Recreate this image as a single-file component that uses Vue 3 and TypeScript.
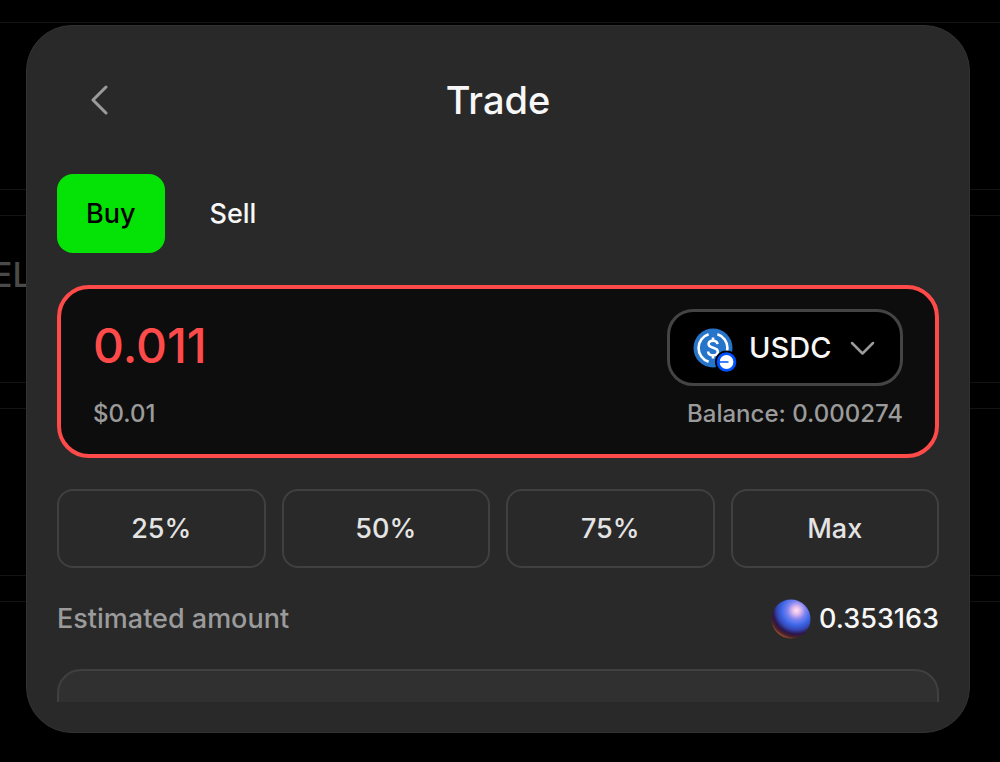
<script setup lang="ts">
import { ref } from 'vue'

type Side = 'Buy' | 'Sell'

const sides: Side[] = ['Buy', 'Sell']
const side = ref<Side>('Buy')
const amount = ref('0.011')
const token = ref('USDC')
const balance = 0.000274
const presets = [
  { label: '25%', share: 0.25 },
  { label: '50%', share: 0.5 },
  { label: '75%', share: 0.75 },
  { label: 'Max', share: 1 },
]

function applyPreset(share: number) {
  amount.value = String(Number((balance * share).toFixed(6)))
}
</script>

<template>
  <div class="page">
    <div class="backdrop" aria-hidden="true">
      <div class="backdrop-row"></div>
      <div class="backdrop-row"><span>EL</span></div>
      <div class="backdrop-row"></div>
      <div class="backdrop-row"></div>
    </div>

    <main class="card">
      <header class="header">
        <button class="back" type="button" aria-label="Back">
          <svg width="20" height="30" viewBox="0 0 20 30" fill="none" stroke="currentColor" stroke-width="3" stroke-linecap="round" stroke-linejoin="round">
            <path d="M17 2 4 15l13 13" />
          </svg>
        </button>
        <h1>Trade</h1>
      </header>

      <div class="sides">
        <button
          v-for="s in sides"
          :key="s"
          type="button"
          class="side"
          :class="{ active: side === s }"
          :aria-pressed="side === s"
          @click="side = s"
        >{{ s }}</button>
      </div>

      <section class="entry">
        <div class="entry-line">
          <input v-model="amount" class="amount" type="text" inputmode="decimal" aria-label="Amount" />
          <label class="token">
            <svg class="coin" width="44" height="44" viewBox="0 0 44 44" fill="none">
              <circle cx="20" cy="20" r="19.5" fill="#2775ca" />
              <g stroke="#fff" stroke-width="2.6">
                <path d="M15.6 6.2A14.5 14.5 0 0 0 15.6 33.8" />
                <path d="M24.4 6.2A14.5 14.5 0 0 1 24.4 33.8" />
                <path d="M24.5 16.2c-.3-2.4-2-3.5-4.5-3.5-2.7 0-4.4 1.3-4.4 3.4 0 5 9.2 2.4 9.2 7.6 0 2.200-1.900 3.600-4.800 3.600-2.900 0-4.700-1.300-4.900-3.800" />
                <path d="M20 9.500v3.500M20 27v3.500" />
              </g>
              <circle cx="33.500" cy="34" r="11.500" fill="#000" />
              <circle cx="33.500" cy="34" r="9.800" fill="#0052ff" />
              <circle cx="33.500" cy="34" r="6.900" fill="#fff" />
              <path d="M26 34h9.500" stroke="#0052ff" stroke-width="1.500" />
            </svg>
            <select v-model="token" aria-label="Token">
              <option>USDC</option>
            </select>
            <svg class="chevron" width="26" height="18" viewBox="0 0 26 18" fill="none" stroke="currentColor" stroke-width="2.500" stroke-linecap="round" stroke-linejoin="round">
              <path d="M3 4l10.500 10.500L24 4" />
            </svg>
          </label>
        </div>
        <div class="entry-line note">
          <span>$0.01</span>
          <span>Balance: 0.000274</span>
        </div>
      </section>

      <div class="presets">
        <button v-for="p in presets" :key="p.label" type="button" @click="applyPreset(p.share)">{{ p.label }}</button>
      </div>

      <div class="estimate">
        <span class="estimate-label">Estimated amount</span>
        <span class="estimate-value">
          <svg width="40" height="40" viewBox="0 0 40 40">
            <defs>
              <radialGradient id="orb" cx="0.640" cy="0.280" r="0.780">
                <stop offset="0" stop-color="#ffe4f4" />
                <stop offset="0.120" stop-color="#e6bdec" />
                <stop offset="0.300" stop-color="#7e83f0" />
                <stop offset="0.480" stop-color="#3d68e8" />
                <stop offset="0.640" stop-color="#3447b4" />
                <stop offset="0.780" stop-color="#2b164a" />
                <stop offset="0.880" stop-color="#4a202a" />
                <stop offset="1" stop-color="#b8622f" />
              </radialGradient>
            </defs>
            <circle cx="20" cy="20" r="19.500" fill="url(#orb)" />
          </svg>
          0.353163
        </span>
      </div>

      <div class="peek"><div class="peek-panel"></div></div>
    </main>
  </div>
</template>

<style>
body {
  margin: 0;
  background: #000;
}
</style>

<style scoped>
* {
  box-sizing: border-box;
}

.page {
  position: relative;
  min-height: 100vh;
  padding: 25px 30px 29px 26px;
  overflow: hidden;
  background: #000;
  color: #f7f7f7;
  font-family: Inter, "Liberation Sans", sans-serif;
  font-weight: 500;
}

button,
input,
select {
  margin: 0;
  padding: 0;
  border: 0;
  background: none;
  color: inherit;
  font: inherit;
}

button {
  cursor: pointer;
}

svg {
  display: block;
  flex: none;
}

.backdrop {
  position: absolute;
  inset: 0;
  display: flex;
  flex-direction: column;
  gap: 25px;
  padding-top: 22px;
  overflow: hidden;
}

.backdrop-row {
  display: flex;
  flex: none;
  align-items: center;
  height: 168px;
  margin-left: -8px;
  padding-bottom: 50px;
  border: solid #131313;
  border-width: 1px 0;
  color: #4a4a4a;
  font-size: 34px;
}

.card {
  position: relative;
  padding: 0 30px 30px;
  border: 1px solid #323232;
  border-radius: 46px;
  background: #292929;
}

.header {
  display: grid;
  grid-template-columns: 24px 1fr 24px;
  align-items: center;
  height: 148px;
  padding: 0 32px;
}

.back {
  color: #9b9b9b;
}

h1 {
  margin: 0;
  font-size: 38px;
  font-weight: 500;
  line-height: 48px;
  text-align: center;
}

.sides {
  display: flex;
  gap: 16px;
}

.side {
  height: 79px;
  padding: 0 29px;
  border-radius: 16px;
  font-size: 27px;
}

.side.active {
  background: #05e205;
  color: #000;
}

.entry {
  display: grid;
  grid-template-columns: minmax(0, 1fr);
  gap: 12px;
  margin-top: 32px;
  padding: 20px 32px 24px;
  border: 4px solid #ff4a4a;
  border-radius: 32px;
  background: #0d0d0d;
}

.entry-line {
  display: flex;
  align-items: center;
  justify-content: space-between;
}

.amount {
  flex: 1;
  min-width: 0;
  height: 72px;
  margin-bottom: 4px;
  outline: 0;
  color: #ff4a4a;
  font-size: 48px;
}

.token {
  display: flex;
  flex: none;
  align-items: center;
  width: 236px;
  height: 77px;
  padding: 0 25px 0 23px;
  border: 3px solid #444;
  border-radius: 26px;
  background: #000;
  font-size: 29px;
}

.coin {
  margin-top: 4px;
}

.token select {
  flex: 1;
  min-width: 0;
  margin-left: 12px;
  appearance: none;
  outline: 0;
}

.chevron {
  color: #9b9b9b;
}

.note {
  color: #9b9b9b;
  font-size: 24px;
  line-height: 32px;
}

.presets {
  display: grid;
  grid-template-columns: repeat(4, 1fr);
  gap: 16px;
  margin-top: 31px;
}

.presets button {
  height: 79px;
  border: 2px solid #404040;
  border-radius: 16px;
  color: #e4e4e4;
  font-size: 27px;
}

.estimate {
  display: flex;
  align-items: center;
  justify-content: space-between;
  height: 101px;
  font-size: 27px;
}

.estimate-label {
  color: #9b9b9b;
}

.estimate-value {
  display: flex;
  align-items: center;
  gap: 8px;
}

.peek {
  height: 33px;
  overflow: hidden;
}

.peek-panel {
  height: 80px;
  border: 2px solid #404040;
  border-radius: 24px;
  background: #303030;
}
</style>
